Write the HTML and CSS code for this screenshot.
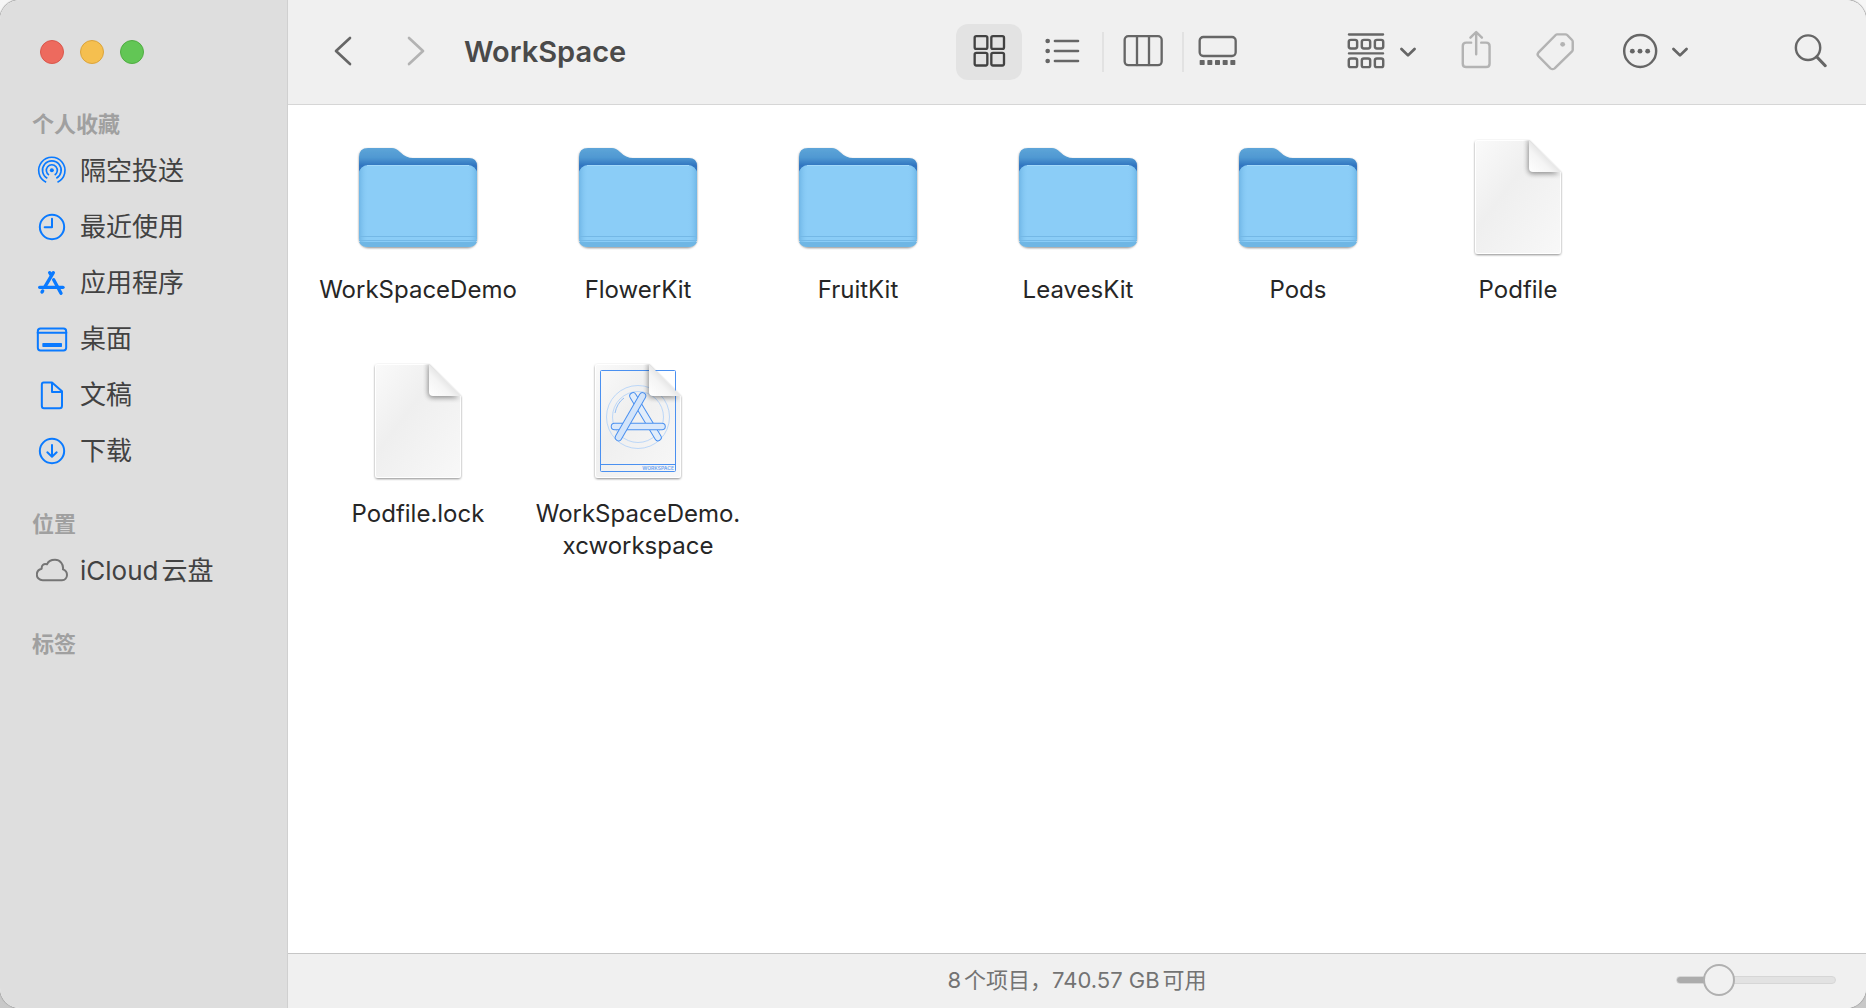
FILE: index.html
```html
<!DOCTYPE html>
<html lang="zh-CN">
<head>
<meta charset="utf-8">
<meta name="viewport" content="width=device-width, initial-scale=1">
<title>WorkSpace</title>
<link rel="stylesheet" href="styles.css">
</head>
<body>
<svg class="defs" aria-hidden="true">
  <defs>
    <linearGradient id="folder-back" x1="0" y1="0" x2="0" y2="1">
      <stop offset="0" stop-color="#5ea5d8"/>
      <stop offset=".15" stop-color="#4f98d2"/>
      <stop offset=".27" stop-color="#3175c0"/>
      <stop offset="1" stop-color="#3a7fc6"/>
    </linearGradient>
    <linearGradient id="folder-side" x1="0" y1="0" x2="1" y2="0">
      <stop offset="0" stop-color="#6fb6e6"/>
      <stop offset=".08" stop-color="#8bcdf7" stop-opacity="0"/>
      <stop offset=".92" stop-color="#8bcdf7" stop-opacity="0"/>
      <stop offset="1" stop-color="#6fb6e6"/>
    </linearGradient>
    <linearGradient id="paper" x1="0" y1="0" x2="1" y2="1">
      <stop offset="0" stop-color="#fafafa"/>
      <stop offset=".4" stop-color="#efefef"/>
      <stop offset="1" stop-color="#f8f8f8"/>
    </linearGradient>
    <linearGradient id="fold" x1="0" y1="1" x2=".6" y2=".4">
      <stop offset="0" stop-color="#ffffff"/>
      <stop offset=".6" stop-color="#f4f4f4"/>
      <stop offset="1" stop-color="#dedede"/>
    </linearGradient>
    <filter id="drop" x="-20%" y="-20%" width="140%" height="140%">
      <feDropShadow dx="0" dy="1" stdDeviation="1" flood-color="#000" flood-opacity=".45"/>
    </filter>
    <filter id="soft" x="-40%" y="-40%" width="180%" height="180%">
      <feGaussianBlur stdDeviation="2.5"/>
    </filter>
    <clipPath id="page-clip"><path d="M24 7H75L107 39V118Q107 121 104 121H24Q21 121 21 118V10Q21 7 24 7Z"/></clipPath>
    <symbol id="folder" viewBox="0 0 128 128">
      <g filter="url(#drop)">
        <path fill="url(#folder-back)" d="M5 24Q5 15 14 15H38Q42 15 46 19Q52 25 59 25H115Q123 25 123 33V80H5Z"/>
        <rect x="5" y="32" width="118" height="82" rx="9" fill="#8bcdf7"/>
      </g>
      <rect x="5" y="32" width="118" height="82" rx="9" fill="url(#folder-side)"/>
      <path fill="#6fb6e4" d="M5 109H123Q121 114 114 114H14Q7 114 5 109Z"/>
      <path stroke="#74b8e6" d="M5 103.500H123M5 107.500H123"/>
      <path stroke="#a3d9fa" d="M13 32.500H115" />
    </symbol>
    <symbol id="page-base" viewBox="0 0 128 128">
      <path filter="url(#drop)" fill="url(#paper)" d="M24 7H75L107 39V118Q107 121 104 121H24Q21 121 21 118V10Q21 7 24 7Z"/>
      <path fill="none" stroke="#fff" d="M75 7.500H24Q21.500 7.500 21.500 10V118Q21.500 120.500 24 120.500H104Q106.500 120.500 106.500 118V39"/>
    </symbol>
    <symbol id="page-fold" viewBox="0 0 128 128">
      <g clip-path="url(#page-clip)">
        <path filter="url(#soft)" fill="#000" opacity=".4" d="M74 4V36Q74 41 79 41H106L90 30Z"/>
        <path fill="#fff" d="M75 5L109 39V5Z"/>
      </g>
      <path fill="url(#fold)" d="M75 7V35Q75 39 79 39H107Z"/>
    </symbol>
    <symbol id="page" viewBox="0 0 128 128">
      <use href="#page-base"/>
      <use href="#page-fold"/>
    </symbol>
    <symbol id="workspace" viewBox="0 0 128 128">
      <use href="#page-base"/>
      <g fill="none" stroke="#4a90f0">
        <rect x="26.500" y="13.500" width="75" height="101" rx="1"/>
        <path d="M26.500 107.500H101.500"/>
      </g>
      <g fill="none" stroke="#bcd7f8">
        <circle cx="64" cy="60" r="31.500"/>
        <circle cx="64" cy="60" r="25.500"/>
        <path stroke="#94bff5" d="M41 56Q43 46 50 41"/>
      </g>
      <g fill="none" stroke-linecap="round">
        <path stroke="#4a90f0" stroke-width="7.500" d="M59 39L84 80.500"/>
        <path stroke="#e2edfa" stroke-width="5.500" d="M59 39L84 80.500"/>
        <path stroke="#4a90f0" stroke-width="7.500" d="M40.500 69.500H88"/>
        <path stroke="#dbe9fb" stroke-width="5.500" d="M40.500 69.500H88"/>
        <path stroke="#4a90f0" stroke-width="7.500" d="M68.500 39L44.500 80.500"/>
        <path stroke="#d3e4fa" stroke-width="5.500" d="M68.500 39L44.500 80.500"/>
      </g>
      <text class="badge" x="100" y="113" text-anchor="end">WORKSPACE</text>
      <use href="#page-fold"/>
    </symbol>
  </defs>
</svg>

<div class="window">
  <aside class="sidebar">
    <div class="lights">
      <button class="light light-close" aria-label="关闭"></button>
      <button class="light light-min" aria-label="最小化"></button>
      <button class="light light-zoom" aria-label="缩放"></button>
    </div>
    <nav>
      <h2 class="heading">个人收藏</h2>
      <ul class="places">
        <li><a class="place" href="#airdrop">
          <svg class="place-icon" viewBox="108 465 96 96"><g fill="none" stroke-width="5" stroke-linecap="butt"><path d="M138.500 547A39.500 39.500 0 1 1 172.500 547"/><path d="M142 535A28 28 0 1 1 169 535"/><path d="M147 525A16.500 16.500 0 1 1 164 525"/></g><circle class="solid" cx="155.500" cy="511" r="6"/></svg>
          隔空投送</a></li>
        <li><a class="place" href="#recents">
          <svg class="place-icon" viewBox="108 633 96 96"><circle cx="156" cy="681" r="36.500"/><path d="M156 656V682H134"/></svg>
          最近使用</a></li>
        <li><a class="place" href="#applications">
          <svg class="place-icon" viewBox="108 801 96 96"><g stroke-width="10"><path d="M160 818L135 860M149 818L154 826M126 876L128 873M161 839L183 880"/><path d="M119 862H189"/></g></svg>
          应用程序</a></li>
        <li><a class="place" href="#desktop">
          <svg class="place-icon" viewBox="108 69 96 96"><rect x="113.500" y="85.500" width="85" height="66" rx="8"/><path d="M113 98H199"/><rect class="solid" x="127" y="129" width="59" height="12" rx="2"/></svg>
          桌面</a></li>
        <li><a class="place" href="#documents">
          <svg class="place-icon" viewBox="108 237 96 96"><path d="M131 247.500H156L186 274V317Q186 324.500 179 324.500H132Q125.500 324.500 125.500 317V254Q125.500 247.500 131 247.500ZM156 250V276H184"/></svg>
          文稿</a></li>
        <li><a class="place" href="#downloads">
          <svg class="place-icon" viewBox="108 405 96 96"><circle cx="156" cy="453" r="36.500"/><path d="M156 435V469M142 457L156 470L170 457"/></svg>
          下载</a></li>
      </ul>
      <h2 class="heading">位置</h2>
      <ul class="places">
        <li><a class="place place-gray" href="#icloud">
          <svg class="place-icon" viewBox="108 765 96 96"><path d="M128 840.500H186C195 840.500 201 833 201 825C201 816 195 810 189 808C191 792 180 779.500 165 779.500C153 779.500 144 786 141 793C132 789 124 796 125 806C116 808 110.500 816 110.500 824C110.500 833 118 840.500 128 840.500Z"/></svg>
          <span>iCloud<span class="han">云盘</span></span></a></li>
      </ul>
      <h2 class="heading">标签</h2>
    </nav>
  </aside>

  <main class="main">
    <header class="toolbar">
      <button class="tool nav-tool" aria-label="后退"><svg class="i48" viewBox="87 84 144 144"><path stroke-width="8" d="M180 114L138 153L180 192"/></svg></button>
      <button class="tool nav-tool" aria-label="前进" disabled><svg class="i48" viewBox="306 84 144 144"><path stroke-width="8" d="M357 114L399 153L357 192"/></svg></button>
      <h1 class="title">WorkSpace</h1>
      <div class="views" role="group" aria-label="显示方式">
        <button class="tool view-tool selected" aria-label="图标"><svg class="i48" viewBox="75 84 144 144"><rect x="104" y="108.500" width="38" height="38" rx="5"/><rect x="154" y="108.500" width="38" height="38" rx="5"/><rect x="104" y="158.500" width="38" height="38" rx="5"/><rect x="154" y="158.500" width="38" height="38" rx="5"/></svg></button>
        <button class="tool list-tool" aria-label="列表"><svg class="i48" viewBox="295 84 144 144"><path stroke-width="8" d="M346 123H415M346 153H415M346 183H415"/><g class="solid"><circle cx="324" cy="123" r="7"/><circle cx="324" cy="153" r="7"/><circle cx="324" cy="183" r="7"/></g></svg></button>
        <span class="rule"></span>
        <button class="tool column-tool" aria-label="分栏"><svg class="i48" viewBox="538 84 144 144"><rect x="555" y="108.500" width="111" height="87" rx="11"/><path d="M592 109V195M628 109V195"/></svg></button>
        <span class="rule"></span>
        <button class="tool view-tool" aria-label="画廊"><svg class="i48" viewBox="760 84 144 144"><rect x="780" y="111" width="108" height="57" rx="11"/><g class="solid"><rect x="780" y="180" width="15" height="15" rx="2"/><rect x="803" y="180" width="15" height="15" rx="2"/><rect x="826" y="180" width="15" height="15" rx="2"/><rect x="849" y="180" width="15" height="15" rx="2"/><rect x="872" y="180" width="15" height="15" rx="2"/></g></svg></button>
      </div>
      <button class="tool group-tool" aria-label="分组"><svg class="i48" viewBox="63 84 138 144" preserveAspectRatio="none"><path d="M83 103.500H181M83 160H181"/><g><rect x="82.500" y="119.500" width="24" height="26" rx="6"/><rect x="120" y="119.500" width="24" height="26" rx="6"/><rect x="157.500" y="119.500" width="24" height="26" rx="6"/><rect x="82.500" y="175.500" width="24" height="26" rx="6"/><rect x="120" y="175.500" width="24" height="26" rx="6"/><rect x="157.500" y="175.500" width="24" height="26" rx="6"/></g></svg><svg class="chevron" viewBox="224 120 58 72" preserveAspectRatio="none"><path stroke-width="8" d="M234 147L253 166L272 147"/></svg></button>
      <button class="tool share-tool" aria-label="共享" disabled><svg class="i48" viewBox="380 84 138 144" preserveAspectRatio="none"><path d="M435 128H421Q411 128 411 138V191Q411 201 421 201H478Q488 201 488 191V138Q488 128 478 128H464M449.500 163V97M433 113L449.500 96L466 113"/></svg></button>
      <button class="tool tag-tool" aria-label="标签" disabled><svg class="i48" viewBox="606 84 138 144" preserveAspectRatio="none"><path d="M681 103H705Q708 103 710 105L724 120Q726 122 726 125V149Q726 152 724 154L674 205Q668 210 662 205L627 168Q623 163 627 158L677 105Q679 103 681 103Z"/><circle class="solid" cx="697" cy="133" r="7"/></svg></button>
      <button class="tool more-tool" aria-label="操作"><svg class="i48" viewBox="849 84 138 144" preserveAspectRatio="none"><ellipse cx="918.500" cy="153" rx="46" ry="48"/><g class="solid"><circle cx="896" cy="153.500" r="7"/><circle cx="918" cy="153.500" r="7"/><circle cx="940" cy="153.500" r="7"/></g></svg><svg class="chevron" viewBox="1005 120 58 72" preserveAspectRatio="none"><path stroke-width="8" d="M1015 147L1034 166L1053 147"/></svg></button>
      <button class="tool search-tool" aria-label="搜索"><svg class="i48" viewBox="1341 84 138 144" preserveAspectRatio="none"><ellipse cx="1401.500" cy="143" rx="35" ry="37"/><path stroke-width="9" d="M1427 171L1451 197"/></svg></button>
    </header>

    <ul class="files">
      <li><a class="file" href="#WorkSpaceDemo"><svg class="file-icon"><use href="#folder"/></svg><span>WorkSpaceDemo</span></a></li>
      <li><a class="file" href="#FlowerKit"><svg class="file-icon"><use href="#folder"/></svg><span>FlowerKit</span></a></li>
      <li><a class="file" href="#FruitKit"><svg class="file-icon"><use href="#folder"/></svg><span>FruitKit</span></a></li>
      <li><a class="file" href="#LeavesKit"><svg class="file-icon"><use href="#folder"/></svg><span>LeavesKit</span></a></li>
      <li><a class="file" href="#Pods"><svg class="file-icon"><use href="#folder"/></svg><span>Pods</span></a></li>
      <li><a class="file" href="#Podfile"><svg class="file-icon"><use href="#page"/></svg><span>Podfile</span></a></li>
      <li><a class="file" href="#Podfile.lock"><svg class="file-icon"><use href="#page"/></svg><span>Podfile.lock</span></a></li>
      <li><a class="file" href="#xcworkspace"><svg class="file-icon"><use href="#workspace"/></svg><span>WorkSpaceDemo.<wbr>xcworkspace</span></a></li>
    </ul>

    <footer class="status">
      <p class="summary">8<span class="han">个项目，</span>740.57 GB<span class="han">可用</span></p>
      <input class="size" type="range" min="0" max="100" value="21" aria-label="图标大小">
    </footer>
  </main>
</div>
</body>
</html>
```
FILE: styles.css
```css
* {
  box-sizing: border-box;
}

body {
  margin: 0;
  background: linear-gradient(#f6f6f6, #c8c8c8);
  font-family: Inter, "Noto Sans CJK SC", sans-serif;
  color: #262626;
}

h1, h2, p, ul {
  margin: 0;
  padding: 0;
}

ul {
  list-style: none;
}

a {
  color: inherit;
  text-decoration: none;
}

button {
  margin: 0;
  padding: 0;
  border: 0;
  background: none;
  color: inherit;
}

svg {
  display: block;
  flex: none;
}

.defs {
  position: absolute;
  width: 0;
  height: 0;
}

.window {
  display: grid;
  grid-template-columns: 288px 1fr;
  min-height: 100vh;
  border-radius: 20px;
  overflow: hidden;
  background: #fff;
  box-shadow: 0 0 1px 1px #a8a8a8;
}

/* Sidebar */
.sidebar {
  padding-top: 40px;
  background: #dedede;
  border-right: 1px solid #d0d0d0;
}

.lights {
  display: flex;
  gap: 16px;
  padding-left: 40px;
  margin-bottom: 48px;
}

.light {
  width: 24px;
  height: 24px;
  border-radius: 50%;
}

.light-close {
  background: #ed6a5e;
  border: 1px solid #d9574c;
}

.light-min {
  background: #f5bf4f;
  border: 1px solid #dba43c;
}

.light-zoom {
  background: #62c655;
  border: 1px solid #50ad42;
}

.heading {
  padding-left: 32px;
  font-size: 22px;
  font-weight: 700;
  line-height: 24px;
  color: #a0a0a0;
}

.places {
  padding: 7px 0 33px;
}

.place {
  display: flex;
  align-items: center;
  gap: 12px;
  height: 56px;
  padding-left: 36px;
  font-size: 26px;
  line-height: 32px;
  color: #424242;
}

.place-icon {
  width: 32px;
  height: 32px;
  fill: none;
  stroke: #0a7aff;
  stroke-width: 6;
  stroke-linecap: round;
  stroke-linejoin: round;
}

.place-icon .solid {
  fill: #0a7aff;
  stroke: none;
}

.place-gray .place-icon {
  stroke: #757575;
}

.han {
  margin-left: 3px;
}

/* Toolbar */
.main {
  display: flex;
  flex-direction: column;
  min-width: 0;
}

.toolbar {
  display: flex;
  align-items: center;
  height: 105px;
  padding: 0 25px 0 18px;
  background: #f0f0f0;
  border-bottom: 1px solid #d6d6d6;
}

.tool {
  display: flex;
  align-items: center;
  justify-content: center;
  height: 56px;
  color: #666;
}

.tool:disabled {
  color: #b3b3b3;
}

.tool svg {
  fill: none;
  stroke: currentColor;
  stroke-width: 7;
  stroke-linecap: round;
  stroke-linejoin: round;
}

.tool .solid {
  fill: currentColor;
  stroke: none;
}

.i48 {
  width: 48px;
  height: 48px;
}

.nav-tool {
  width: 73px;
}

.title {
  flex: 1;
  padding-left: 12px;
  font-size: 29px;
  font-weight: 600;
  line-height: 40px;
  color: #4a4a4a;
}

.views {
  display: flex;
  align-items: center;
  margin-right: 89px;
}

.view-tool {
  width: 66px;
}

.selected {
  border-radius: 12px;
  background: #e3e3e3;
  color: #424242;
}

.list-tool {
  width: 80px;
}

.column-tool {
  width: 78px;
}

.rule {
  width: 2px;
  height: 40px;
  background: #e2e2e2;
}

.group-tool {
  width: 82px;
  gap: 8px;
}

.more-tool {
  width: 80px;
  margin-left: 28px;
  gap: 6px;
}

.chevron {
  width: 20px;
  height: 24px;
}

.share-tool,
.tag-tool,
.search-tool {
  width: 60px;
}

.share-tool {
  margin-left: 25px;
}

.tag-tool {
  margin-left: 19px;
}

.search-tool {
  margin-left: 88px;
}

/* Icon view */
.files {
  flex: 1;
  display: grid;
  grid-template-columns: repeat(auto-fill, 220px);
  grid-auto-rows: minmax(192px, max-content);
  align-content: start;
  row-gap: 32px;
  padding: 28px 20px;
}

.file {
  display: flex;
  flex-direction: column;
  align-items: center;
  gap: 13px;
  font-size: 24px;
  line-height: 32px;
  text-align: center;
}

.file-icon {
  width: 128px;
  height: 128px;
}

.badge {
  font-size: 5px;
  font-weight: 600;
  fill: #6aa3f2;
}

/* Status bar */
.status {
  display: grid;
  grid-template-columns: 1fr auto 1fr;
  align-items: center;
  height: 55px;
  padding: 0 30px 2px;
  background: #f0f0f0;
  border-top: 1px solid #c6c6c6;
}

.summary {
  grid-column: 2;
  font-size: 22px;
  line-height: 32px;
  color: #737373;
}

.size {
  justify-self: end;
  width: 160px;
  height: 32px;
  margin: 0;
  appearance: none;
  background: none;
}

.size::-webkit-slider-runnable-track {
  height: 8px;
  border: 1px solid #d6d6d6;
  border-radius: 4px;
  background: linear-gradient(90deg, #acacac 40px, #e2e2e2 40px);
}

.size::-webkit-slider-thumb {
  appearance: none;
  width: 32px;
  height: 32px;
  margin-top: -13px;
  border: 2px solid #b0b0b0;
  border-radius: 50%;
  background: #f1f1f1;
}
```
